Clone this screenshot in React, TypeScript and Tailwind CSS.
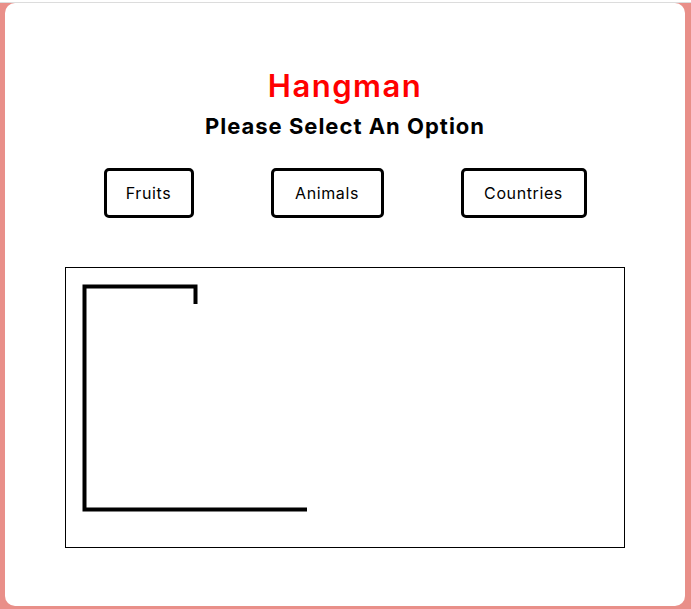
import React from 'react';

const categories = [
  { label: 'Fruits', width: 'w-[90px]' },
  { label: 'Animals', width: 'w-[113px]' },
  { label: 'Countries', width: 'w-[126px]' },
];

export default function App() {
  return (
    <div className="h-[609px] overflow-hidden bg-[#e98f89] font-['Inter',sans-serif]">
      <div className="h-[2px] bg-white" />
      <div className="h-px bg-[#dcdcdc]" />
      <div className="ml-[5px] mr-[6px] flex h-[603px] flex-col items-center rounded-[10px] bg-white pt-[65px]">
        <h1 className="text-[31px] font-semibold leading-[36px] tracking-[1.5px] text-[#ff0000]">Hangman</h1>
        <h2 className="mt-[9px] text-[22px] font-bold leading-[26px] tracking-[1px] text-black">Please Select An Option</h2>

        <div className="mt-[29px] flex gap-[77px]">
          {categories.map((c) => (
            <button
              key={c.label}
              className={`${c.width} h-[50px] rounded-[5px] border-[3px] border-black bg-white text-[16px] tracking-[0.6px] text-black`}
            >
              {c.label}
            </button>
          ))}
        </div>

        {/* gallows area */}
        <div className="mt-[49px] h-[281px] w-[560px] border border-black">
          <svg width="558" height="279" viewBox="0 0 558 279">
            <polyline
              points="241,241.5 18.5,241.5 18.5,18.5 129.5,18.5 129.5,36"
              fill="none"
              stroke="black"
              strokeWidth="4"
              strokeLinejoin="miter"
            />
          </svg>
        </div>
      </div>
    </div>
  );
}
